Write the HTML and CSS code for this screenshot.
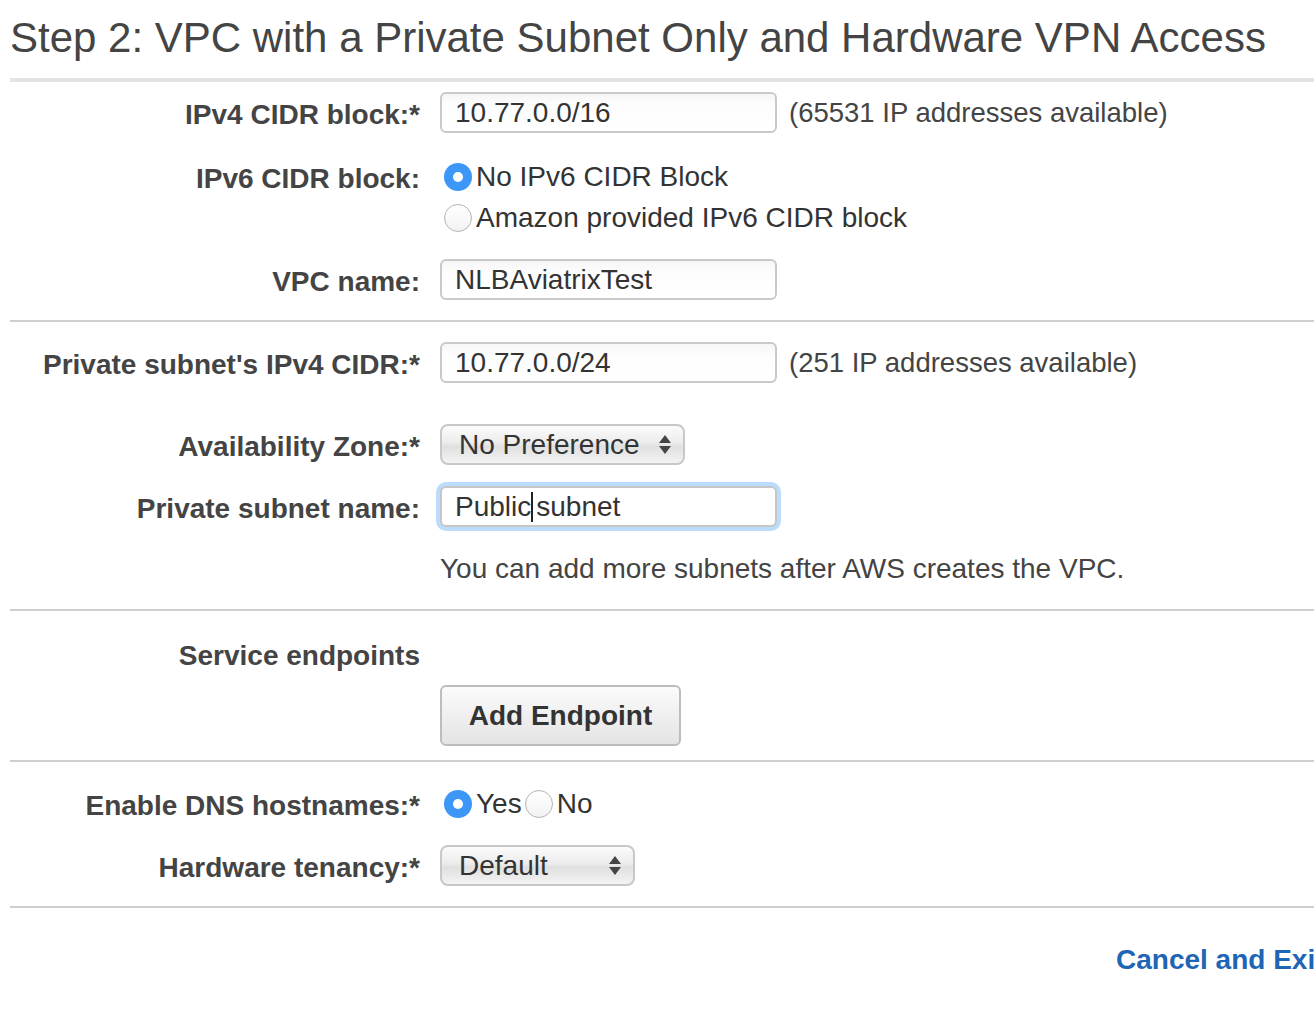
FILE: index.html
```html
<!DOCTYPE html>
<html>
<head>
<meta charset="utf-8">
<link rel="stylesheet" href="styles.css">
</head>
<body>
<div class="page">
  <h1 class="title">Step 2: VPC with a Private Subnet Only and Hardware VPN Access</h1>

  <section class="sec sec-a">
    <div class="row">
      <div class="label">IPv4 CIDR block:*</div>
      <div class="ctl">
        <div class="input w337">10.77.0.0/16</div>
        <span class="note">(65531 IP addresses available)</span>
      </div>
    </div>
    <div class="row row-top">
      <div class="label lbl-line">IPv6 CIDR block:</div>
      <div class="radios-col">
        <label class="radio-line"><span class="radio on"></span>No IPv6 CIDR Block</label>
        <label class="radio-line"><span class="radio"></span>Amazon provided IPv6 CIDR block</label>
      </div>
    </div>
    <div class="row">
      <div class="label">VPC name:</div>
      <div class="ctl">
        <div class="input w337">NLBAviatrixTest</div>
      </div>
    </div>
  </section>

  <section class="sec sec-b">
    <div class="row">
      <div class="label">Private subnet's IPv4 CIDR:*</div>
      <div class="ctl">
        <div class="input w337">10.77.0.0/24</div>
        <span class="note">(251 IP addresses available)</span>
      </div>
    </div>
    <div class="row row-az">
      <div class="label">Availability Zone:*</div>
      <div class="ctl">
        <div class="select w245">No Preference<span class="arrows"><i class="up"></i><i class="down"></i></span></div>
      </div>
    </div>
    <div class="row">
      <div class="label">Private subnet name:</div>
      <div class="ctl">
        <div class="input w337 focus">Public<span class="caret"></span>subnet</div>
      </div>
    </div>
    <div class="row">
      <div class="label"></div>
      <div class="help">You can add more subnets after AWS creates the VPC.</div>
    </div>
  </section>

  <section class="sec sec-c">
    <div class="row">
      <div class="label">Service endpoints</div>
    </div>
    <div class="row row-btn">
      <div class="label"></div>
      <button class="btn">Add Endpoint</button>
    </div>
  </section>

  <section class="sec sec-d">
    <div class="row">
      <div class="label">Enable DNS hostnames:*</div>
      <div class="ctl ctl-radios">
        <label class="radio-line"><span class="radio on"></span>Yes</label>
        <label class="radio-line"><span class="radio"></span>No</label>
      </div>
    </div>
    <div class="row">
      <div class="label">Hardware tenancy:*</div>
      <div class="ctl">
        <div class="select w195">Default<span class="arrows"><i class="up"></i><i class="down"></i></span></div>
      </div>
    </div>
  </section>

  <div class="footer">
    <a class="link" href="#">Cancel and Exit</a>
  </div>
</div>
</body>
</html>
```

FILE: styles.css
```css
html, body {
  margin: 0;
  padding: 0;
  background: #fff;
  overflow: hidden;
}
body {
  font-family: "Liberation Sans", Arial, Helvetica, sans-serif;
  color: #444;
}
.page {
  width: 1304px;
  padding-left: 10px;
}
.title {
  margin: 0;
  padding-top: 14px;
  height: 64px;
  font-size: 42px;
  font-weight: normal;
  line-height: 48px;
  color: #444;
  white-space: nowrap;
  border-bottom: 4px solid #e4e4e4;
}
.sec {
  border-bottom: 2px solid #cfcfcf;
  display: flex;
  flex-direction: column;
  gap: 21px;
}
.sec-a { padding: 10px 0 20px; }
.sec-a .row-top { margin-top: 2px; }
.sec-b { padding: 20px 0 20px; gap: 21px; }
.sec-b .row-az { margin-top: 20px; }
.sec-c { padding: 22px 0 14px; gap: 11px; }
.sec-d { padding: 21px 0 20px; }
.row {
  display: flex;
  align-items: center;
  gap: 20px;
  min-height: 41px;
}
.row-top { align-items: flex-start; }
.label {
  box-sizing: border-box;
  width: 410px;
  height: 41px;
  flex: none;
  text-align: right;
  font-weight: bold;
  font-size: 28px;
  line-height: 41px;
  color: #444;
  white-space: nowrap;
  padding-top: 2px;
}
.ctl {
  display: flex;
  align-items: center;
  gap: 12px;
}
.input {
  box-sizing: border-box;
  height: 41px;
  border: 2px solid #c9c9c9;
  border-radius: 6px;
  background: linear-gradient(#f6f6f6, #fdfdfd 30%, #fff);
  font-size: 28px;
  line-height: 38px;
  padding-left: 13px;
  color: #333;
  white-space: nowrap;
  overflow: hidden;
}
.input.focus {
  box-shadow: 0 0 0 4px #bcdcfb;
  border-color: #c6c6c6;
  background: #fff;
}
.caret {
  display: inline-block;
  width: 2px;
  height: 30px;
  background: #222;
  vertical-align: -6px;
  margin: 0 3px 0 0;
}
.w337 { width: 337px; }
.w245 { width: 245px; }
.w195 { width: 195px; }
.note {
  font-size: 27.5px;
  color: #444;
  white-space: nowrap;
}
.select {
  box-sizing: border-box;
  height: 41px;
  position: relative;
  border: 2px solid #c8c8c8;
  border-radius: 8px;
  background: linear-gradient(#fbfbfb, #ececec 45%, #e0e0e0 55%, #f3f3f3);
  font-size: 28px;
  line-height: 38px;
  padding-left: 17px;
  color: #333;
  white-space: nowrap;
}
.arrows {
  position: absolute;
  right: 12px;
  top: 9px;
  display: flex;
  flex-direction: column;
  gap: 3px;
}
.arrows i {
  width: 0;
  height: 0;
  border-left: 6px solid transparent;
  border-right: 6px solid transparent;
}
.arrows .up { border-bottom: 8px solid #444; }
.arrows .down { border-top: 8px solid #444; }
.radios-col {
  display: flex;
  flex-direction: column;
  margin-left: 4px;
}
.ctl-radios { gap: 3px; margin-left: 4px; }
.radio-line {
  display: flex;
  align-items: center;
  height: 41px;
  font-size: 28px;
  color: #333;
  white-space: nowrap;
}
.radio {
  box-sizing: border-box;
  width: 28px;
  height: 28px;
  border-radius: 50%;
  border: 1.5px solid #b5b5b5;
  background: linear-gradient(#fff, #f2f2f2);
  margin-right: 4px;
  flex: none;
  position: relative;
}
.radio.on {
  border: none;
  background: #3d97f7;
}
.radio.on::after {
  content: "";
  position: absolute;
  left: 9px;
  top: 9px;
  width: 10px;
  height: 10px;
  border-radius: 50%;
  background: #fff;
}
.help {
  font-size: 28px;
  color: #444;
  line-height: 41px;
  white-space: nowrap;
}
.row-btn { align-items: flex-start; }
.btn {
  box-sizing: border-box;
  width: 241px;
  height: 61px;
  border: 2px solid #bdbdbd;
  border-radius: 6px;
  background: linear-gradient(#fbfbfb, #e4e4e4);
  font-family: "Liberation Sans", Arial, sans-serif;
  font-weight: bold;
  font-size: 28px;
  color: #333;
  padding: 0;
}
.footer {
  padding: 36px 0 0 1106px;
  white-space: nowrap;
}
.link {
  font-weight: bold;
  font-size: 28px;
  color: #1f65b6;
  text-decoration: none;
}
```
